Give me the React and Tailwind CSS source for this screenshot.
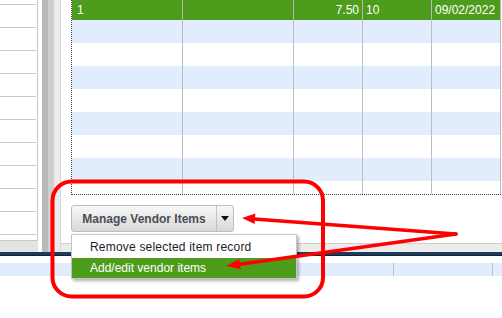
import React from "react";

const green = "bg-[#4e9c1b]";

const cols = [
  { w: "w-[111px]", text: "1", align: "justify-start pl-[5px]" },
  { w: "w-[111px]", text: "", align: "" },
  { w: "w-[69px]", text: "7.50", align: "justify-end pr-[3px]" },
  { w: "w-[69px]", text: "10", align: "justify-start pl-[3px]" },
  { w: "w-[69px]", text: "09/02/2022", align: "justify-start pl-[3px]" },
];

function SidePanel() {
  return (
    <div className="flex h-[252px]">
      <div className="flex flex-col w-[38px]">
        <div className="h-[240px] bg-white pt-[4px] border-r border-[#c4c4c4]">
          {Array.from({ length: 11 }).map((_, i) => (
            <div key={i} className="h-[23px] mr-[1px] border-t border-[#c8c8c8]" />
          ))}
        </div>
        <div className="flex-1 bg-[#e4e4e4] border-t border-[#c8c8c8]" />
      </div>
      <div className="w-[4px] bg-white" />
      <div className="w-[6px] bg-[#bababa]" />
      <div className="w-[6px] bg-[#cfcfcf]" />
      <div className="w-[7px] bg-[#ebebeb] border-r border-[#d6d6d6]" />
    </div>
  );
}

function VendorTable() {
  return (
    <div className="h-[195px] w-[430px] overflow-hidden border-l border-b border-dotted border-[#3a3a3a]">
      <div className={`flex h-[20px] ${green} text-white text-[12px] leading-[20px]`}>
        {cols.map((c, i) => (
          <div key={i} className={`${c.w} flex ${c.align} border-r border-[#b8b8b8] pb-[1px]`}>
            {c.text}
          </div>
        ))}
      </div>
      {Array.from({ length: 8 }).map((_, r) => (
        <div key={r} className={`flex h-[23px] ${r % 2 === 0 ? "bg-[#e1edfd]" : "bg-white"}`}>
          {cols.map((c, i) => (
            <div key={i} className={`${c.w} border-r border-[#bcbcbc]`} />
          ))}
        </div>
      ))}
    </div>
  );
}

function ManageButton() {
  return (
    <div className="relative mt-[10px] w-[163px]">
      <div className="flex h-[27px] rounded-[3px] border border-[#bdbdbd] bg-gradient-to-b from-[#f8f8f8] to-[#d8d8d8]">
        <div className="flex-1 flex items-center justify-center text-[12px] font-bold text-[#4a4e57] border-r border-[#c2c2c2]">
          Manage Vendor Items
        </div>
        <div className="w-[16px] flex items-center justify-center">
          <svg width="8" height="5" viewBox="0 0 8 5">
            <polygon points="0,0 8,0 4,5" fill="#111" />
          </svg>
        </div>
      </div>
      <div className="absolute left-0 top-[29px] z-10 w-[226px] bg-white border border-[#c6c6c6] shadow-[2px_2px_3px_rgba(0,0,0,0.3)] text-[12px]">
        <div className="h-[23px] flex items-center pl-[18px] text-[#1c1c2a] tracking-[0.2px]">
          Remove selected item record
        </div>
        <div className={`h-[20px] flex items-center pl-[18px] text-white ${green}`}>
          Add/edit vendor items
        </div>
      </div>
    </div>
  );
}

function Annotations() {
  return (
    <svg className="absolute inset-0 z-20 pointer-events-none" width="502" height="318" viewBox="0 0 502 318">
      <rect x="52.5" y="181.5" width="270.5" height="115" rx="19" fill="none" stroke="#ff0000" strokeWidth="4" />
      <line x1="456" y1="234" x2="254" y2="219" stroke="#ff0000" strokeWidth="3.5" strokeLinecap="round" />
      <line x1="456" y1="234" x2="238" y2="264.5" stroke="#ff0000" strokeWidth="3.5" strokeLinecap="round" />
      <polygon points="242,218 255.4,213.5 254.6,224" fill="#ff0000" />
      <polygon points="226,266 239.2,259.2 240.6,269.2" fill="#ff0000" />
    </svg>
  );
}

export default function App() {
  return (
    <div className="relative w-[502px] h-[318px] overflow-hidden bg-white font-['Liberation_Sans',Arial,sans-serif]">
      <div className="flex h-[252px]">
        <SidePanel />
        <div className="flex-1 flex flex-col">
          <div className="h-[243px] bg-white pl-[10px]">
            <VendorTable />
            <ManageButton />
          </div>
          <div className="flex-1 bg-[#ececec] border-t border-[#cfcfcf]" />
        </div>
      </div>
      <div className="h-[4px] bg-[#1f3b5b] border-b border-[#102236]" />
      <div className="h-[7px] bg-white" />
      <div className="flex h-[13px] bg-[#e1edfd]">
        <div className="w-[394px] border-r border-[#c0c0c0]" />
        <div className="w-[99px] border-r border-[#c0c0c0]" />
      </div>
      <Annotations />
    </div>
  );
}
